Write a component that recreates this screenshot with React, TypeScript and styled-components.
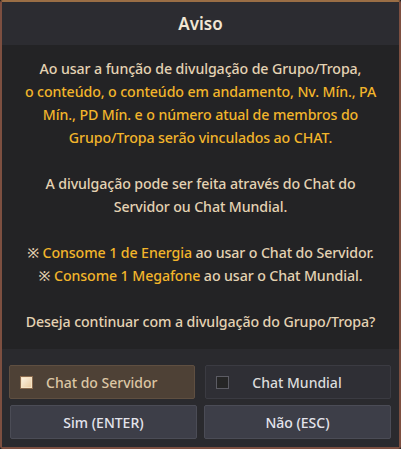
import React from "react";
import styled, { createGlobalStyle } from "styled-components";

const Global = createGlobalStyle`
  html, body { margin: 0; padding: 0; background: #1e1e20; }
  body { font-family: "Noto Sans", "Open Sans", sans-serif; }
`;

const Frame = styled.div`
  width: 401px;
  height: 449px;
  box-sizing: border-box;
  border: 2px solid #7d4f40;
  border-top-color: #9a6e45;
  border-radius: 3px;
  background: #232325;
  display: flex;
  flex-direction: column;
  overflow: hidden;
`;

const Header = styled.div`
  height: 43px;
  flex: none;
  background: #2c2c31;
  display: flex;
  align-items: center;
  justify-content: center;
  color: #f1e6d4;
  font-size: 17px;
  font-weight: 600;
`;

const Body = styled.div`
  flex: 1;
  padding-top: 12px;
  text-align: center;
  color: #e3d2b3;
  font-size: 14.2px;
  font-weight: 500;
  line-height: 23px;
  letter-spacing: -0.1px;
`;

const Para = styled.p`
  margin: 0 0 23px;
  &:last-child { margin-bottom: 0; }
`;

const Gold = styled.span`
  color: #f2b52b;
`;

const Footer = styled.div`
  flex: none;
  height: 98px;
  background: #2a2a2e;
  box-sizing: border-box;
  padding: 16px 0 8px 0;
  display: flex;
  flex-direction: column;
  gap: 6px;
`;

const Row = styled.div<{ $left: number; $gap: number; $w: number }>`
  display: grid;
  grid-template-columns: ${(p) => p.$w}px ${(p) => p.$w}px;
  column-gap: ${(p) => p.$gap}px;
  padding-left: ${(p) => p.$left}px;
`;

const Toggle = styled.div<{ $on?: boolean }>`
  height: 34px;
  box-sizing: border-box;
  border-radius: 2px;
  border: 1px solid ${(p) => (p.$on ? "#5f4f41" : "#3b3b42")};
  background: ${(p) => (p.$on ? "#4e4136" : "#2f2f35")};
  color: ${(p) => (p.$on ? "#dcc6a4" : "#dcdcdc")};
  display: flex;
  align-items: center;
  padding-left: 10px;
  font-size: 14px;
  font-weight: 500;
`;

const Box = styled.span<{ $on?: boolean }>`
  width: 13px;
  height: 13px;
  box-sizing: border-box;
  flex: none;
  border: 1px solid ${(p) => (p.$on ? "#8a6a4e" : "#5c5c64")};
  background: ${(p) =>
    p.$on ? "linear-gradient(135deg, #fff6e6 0%, #e9c79a 100%)" : "#262626"};
  box-shadow: ${(p) => (p.$on ? "inset 0 0 0 1px #f6e3c4" : "none")};
`;

const ToggleLabel = styled.span<{ $center?: boolean }>`
  margin-left: ${(p) => (p.$center ? "0" : "13px")};
  margin-right: ${(p) => (p.$center ? "25px" : "0")};
  flex: ${(p) => (p.$center ? "1" : "none")};
  text-align: ${(p) => (p.$center ? "center" : "left")};
`;

const Button = styled.div`
  height: 34px;
  box-sizing: border-box;
  border-radius: 2px;
  border: 1px solid #4b4c56;
  background: #3d3e48;
  color: #e4e4ec;
  display: flex;
  align-items: center;
  justify-content: center;
  font-size: 14px;
  font-weight: 500;
`;

export default function App() {
  return (
    <>
      <Global />
      <Frame>
        <Header>Aviso</Header>
        <Body>
          <Para>
            Ao usar a função de divulgação de Grupo/Tropa,
            <br />
            <Gold>
              o conteúdo, o conteúdo em andamento, Nv. Mín., PA
              <br />
              Mín., PD Mín. e o número atual de membros do
              <br />
              Grupo/Tropa serão vinculados ao CHAT.
            </Gold>
          </Para>
          <Para>
            A divulgação pode ser feita através do Chat do
            <br />
            Servidor ou Chat Mundial.
          </Para>
          <Para>
            ※ <Gold>Consome 1 de Energia</Gold> ao usar o Chat do Servidor.
            <br />※ <Gold>Consome 1 Megafone</Gold> ao usar o Chat Mundial.
          </Para>
          <Para>Deseja continuar com a divulgação do Grupo/Tropa?</Para>
        </Body>
        <Footer>
          <Row $left={7} $gap={10} $w={186}>
            <Toggle $on>
              <Box $on />
              <ToggleLabel>Chat do Servidor</ToggleLabel>
            </Toggle>
            <Toggle>
              <Box />
              <ToggleLabel $center>Chat Mundial</ToggleLabel>
            </Toggle>
          </Row>
          <Row $left={8} $gap={7} $w={187}>
            <Button>Sim (ENTER)</Button>
            <Button>Não (ESC)</Button>
          </Row>
        </Footer>
      </Frame>
    </>
  );
}
